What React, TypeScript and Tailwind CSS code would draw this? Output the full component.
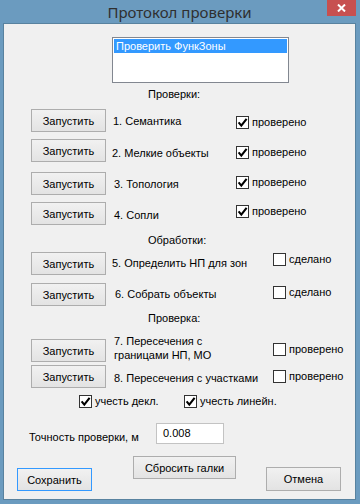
import React from "react";

type BtnProps = { children: React.ReactNode; className?: string; focused?: boolean };

function Btn({ children, className = "", focused }: BtnProps) {
  return (
    <button
      className={
        "flex h-[23px] shrink-0 items-center justify-center border bg-gradient-to-b from-[#f1f1f1] to-[#e3e3e3] text-[11px] leading-[14px] text-black " +
        (focused ? "border-[#3399ff] " : "border-[#adadad] ") +
        className
      }
    >
      {children}
    </button>
  );
}

function Box({ checked }: { checked?: boolean }) {
  return (
    <span className="flex h-[13px] w-[13px] shrink-0 items-center justify-center border border-[#333333] bg-white">
      {checked && (
        <svg width="11" height="11" viewBox="0 0 11 11">
          <path d="M1.6 5.4 L4.3 8.6 L9.6 1.8" stroke="#000" strokeWidth="2.1" fill="none" />
        </svg>
      )}
    </span>
  );
}

function Check({ checked, text, className = "" }: { checked?: boolean; text: string; className?: string }) {
  return (
    <div className={"flex h-[14px] items-center gap-[3px] " + className}>
      <Box checked={checked} />
      <span>{text}</span>
    </div>
  );
}

type RowProps = {
  label: React.ReactNode;
  labelCls: string;
  wide?: boolean;
  checkCls: string;
  checkText: string;
  checked?: boolean;
  className: string;
};

function Row({ label, labelCls, wide, checkCls, checkText, checked, className }: RowProps) {
  return (
    <div className={"flex items-start " + className}>
      <Btn className="ml-[27px] w-[75px]">Запустить</Btn>
      <div className={(wide ? "w-[167px] " : "w-[130px] ") + "leading-[14px] " + labelCls}>{label}</div>
      <Check checked={checked} text={checkText} className={checkCls} />
    </div>
  );
}

function Heading({ children, className }: { children: string; className: string }) {
  return <div className={"ml-[144px] leading-[14px] " + className}>{children}</div>;
}

export default function App() {
  return (
    <div className="flex h-[504px] w-[360px] flex-col bg-[#6b9bbf] pb-[4px] pl-[3px] pr-[4px] [font-family:'Liberation_Sans',Arial,sans-serif]">
      <div className="grid h-[23px] shrink-0 grid-cols-[1fr_auto_1fr]">
        <div />
        <div className="pt-[2px] text-[15px] leading-[20px] text-[#2f2f2f] [font-family:'Noto_Sans','Open_Sans',sans-serif]">
          Протокол проверки
        </div>
        <div className="flex justify-end">
          <div className="flex h-[16px] w-[29px] items-center justify-center bg-[#c75050]">
            <svg width="9" height="8" viewBox="0 0 9 8">
              <path d="M1 0.5 L8 7.5 M8 0.5 L1 7.5" stroke="#fff" strokeWidth="2" />
            </svg>
          </div>
        </div>
      </div>

      <div className="flex flex-1 flex-col border border-[#58829f] bg-[#f0f0f0] text-[11px] text-black">
        <div className="ml-[108px] mt-[13px] h-[46px] w-[177px] border border-[#828790] bg-white p-[1px]">
          <div className="h-[14px] bg-[#3399ff] pl-[2px] leading-[14px] text-white">Проверить ФункЗоны</div>
        </div>

        <Heading className="mt-[4px]">Проверки:</Heading>

        <Row className="mt-[8px]" label="1. Семантика" labelCls="pl-[7px] mt-[5px]" checkCls="mt-[6px]" checkText="проверено" checked />
        <Row className="mt-[7px]" label="2. Мелкие объекты" labelCls="pl-[6px] mt-[7px]" checkCls="mt-[6px]" checkText="проверено" checked />
        <Row className="mt-[10px]" label="3. Топология" labelCls="pl-[8px] mt-[5px]" checkCls="mt-[3px]" checkText="проверено" checked />
        <Row className="mt-[7px]" label="4. Сопли" labelCls="pl-[8px] mt-[6px]" checkCls="mt-[2px]" checkText="проверено" checked />

        <Heading className="mt-[8px]">Обработки:</Heading>

        <Row className="mt-[5px]" wide label="5. Определить НП для зон" labelCls="pl-[6px] mt-[4px]" checkCls="mt-[0px]" checkText="сделано" />
        <Row className="mt-[8px]" wide label="6. Собрать объекты" labelCls="pl-[9px] mt-[4px]" checkCls="mt-[2px]" checkText="сделано" />

        <Heading className="mt-[5px]">Проверка:</Heading>

        <Row
          className="mt-[14px]"
          wide
          label={
            <>
              7. Пересечения с
              <br />
              границами НП, МО
            </>
          }
          labelCls="pl-[8px] -mt-[5px]"
          checkCls="mt-[3px]"
          checkText="проверено"
        />
        <Row className="mt-[3px]" wide label="8. Пересечения с участками" labelCls="pl-[8px] mt-[6px]" checkCls="mt-[4px]" checkText="проверено" />

        <div className="mt-[6px] flex">
          <Check checked text="учесть декл." className="ml-[75px] w-[105px]" />
          <Check checked text="учесть линейн." />
        </div>

        <div className="mt-[15px] flex items-start">
          <span className="ml-[25px] mt-[7px] w-[127px] leading-[14px]">Точность проверки, м</span>
          <div className="h-[21px] w-[68px] border border-[#c3c3c3] bg-white pl-[6px] pt-[2px] leading-[14px]">0.008</div>
        </div>

        <div className="mt-[12px] flex items-start">
          <Btn focused className="ml-[13px] mt-[12px] w-[75px]">Сохранить</Btn>
          <Btn className="ml-[41px] w-[103px]">Сбросить галки</Btn>
          <Btn className="ml-[30px] mt-[11px] h-[24px] w-[75px]">Отмена</Btn>
        </div>
      </div>
    </div>
  );
}
